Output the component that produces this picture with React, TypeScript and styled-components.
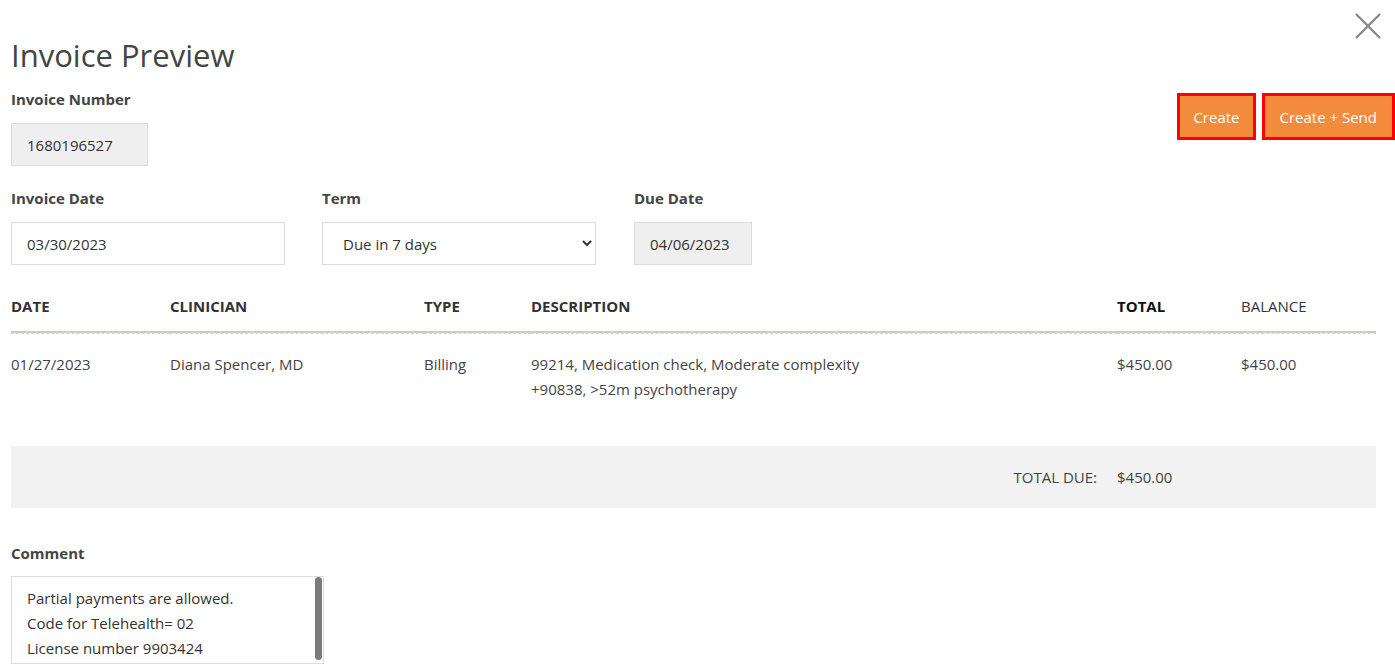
import React from 'react'
import styled, { createGlobalStyle } from 'styled-components'

const GlobalStyle = createGlobalStyle`
  * { box-sizing: border-box; }
  body {
    margin: 0;
    background: #fff;
    font-family: 'Source Sans Pro', 'Open Sans', 'Noto Sans', sans-serif;
    color: #444;
  }
`

const Page = styled.div`
  position: relative;
  padding: 35px 19px 0 11px;
  height: 668px;
  overflow: hidden;
`

const CloseButton = styled.button`
  position: absolute;
  top: 12px;
  right: 13px;
  width: 28px;
  height: 28px;
  padding: 0;
  border: none;
  background: none;
  cursor: pointer;
`

const Title = styled.h1`
  margin: 0;
  font-size: 31px;
  font-weight: 400;
  line-height: 40px;
  color: #444;
`

const TopRow = styled.div`
  display: flex;
  justify-content: space-between;
  align-items: flex-start;
  margin-top: 14px;
  margin-right: -19px;
`

const Field = styled.div<{ $width?: number }>`
  display: flex;
  flex-direction: column;
  width: ${p => (p.$width ? `${p.$width}px` : 'auto')};
`

const Label = styled.label`
  font-size: 15px;
  font-weight: 700;
  line-height: 20px;
  color: #444;
  margin-bottom: 14px;
`

const Input = styled.div<{ $readonly?: boolean }>`
  height: 43px;
  display: flex;
  align-items: center;
  padding: 0 15px;
  font-size: 15px;
  color: #333;
  background: ${p => (p.$readonly ? '#efefef' : '#fff')};
  border: 1px solid #dcdcdc;
`

const Select = styled.select`
  height: 43px;
  padding: 0 8px 0 16px;
  font-family: inherit;
  font-size: 15px;
  color: #333;
  background: #fff;
  border: 1px solid #dcdcdc;
  border-radius: 0;
`

const ButtonGroup = styled.div`
  display: flex;
  gap: 6px;
  margin-top: 4px;
`

const Button = styled.button<{ $wide?: boolean }>`
  height: 47px;
  padding: 0 ${p => (p.$wide ? 15 : 13)}px;
  font-family: inherit;
  font-size: 15px;
  color: #fff;
  background: #f38b3c;
  border: 3px solid #f00;
  cursor: pointer;
`

const FieldRow = styled.div`
  display: grid;
  grid-template-columns: 311px 312px 118px;
  margin-top: 22px;
`

const Table = styled.div`
  margin-top: 31px;
  display: grid;
  grid-template-columns: 159px 254px 107px 586px 124px 1fr;
`

const HeadCell = styled.div<{ $strong?: boolean; $plain?: boolean }>`
  font-size: 15px;
  font-weight: ${p => (p.$plain ? 400 : 700)};
  text-transform: uppercase;
  color: ${p => (p.$strong ? '#111' : '#333')};
  line-height: 20px;
  padding: 0 0 15px;
  border-bottom: 2px solid #d0cbc6;
  position: relative;

  &::after {
    content: '';
    position: absolute;
    left: 0;
    right: 0;
    bottom: -3px;
    border-bottom: 1px dashed #d6d2cd;
  }
`

const Cell = styled.div`
  font-size: 15px;
  line-height: 25px;
  color: #444;
  padding: 19px 0 44px;
`

const TotalBar = styled.div`
  height: 62px;
  display: grid;
  grid-template-columns: 1fr 259px;
  align-items: center;
  background: #f2f2f2;
  font-size: 15px;
  color: #444;
`

const TotalLabel = styled.span`
  justify-self: end;
  padding-right: 20px;
`

const CommentSection = styled.div`
  margin-top: 35px;
  width: 313px;
`

const CommentWrap = styled.div`
  position: relative;
  margin-top: -1px;
`

const CommentBox = styled.textarea`
  display: block;
  width: 313px;
  height: 88px;
  padding: 9px 15px 0;
  font-family: inherit;
  font-size: 15px;
  line-height: 25px;
  color: #333;
  border: 1px solid #dcdcdc;
  resize: none;
  outline: none;
  scrollbar-width: none;

  &::-webkit-scrollbar {
    display: none;
  }
`

const ScrollThumb = styled.div`
  position: absolute;
  top: 1px;
  right: 2px;
  width: 7px;
  height: 83px;
  border-radius: 4px;
  background: #7b7b7b;
  pointer-events: none;
`

const CloseIcon = () => (
  <svg width="28" height="28" viewBox="0 0 28 28">
    <path d="M2 2 L26 26 M26 2 L2 26" stroke="#8a8a8a" strokeWidth="2.4" fill="none" />
  </svg>
)

const App = () => (
  <>
    <GlobalStyle />
    <Page>
      <CloseButton aria-label="Close">
        <CloseIcon />
      </CloseButton>
      <Title>Invoice Preview</Title>
      <TopRow>
        <Field $width={137}>
          <Label>Invoice Number</Label>
          <Input $readonly>1680196527</Input>
        </Field>
        <ButtonGroup>
          <Button>Create</Button>
          <Button $wide>Create + Send</Button>
        </ButtonGroup>
      </TopRow>
      <FieldRow>
        <Field $width={274}>
          <Label>Invoice Date</Label>
          <Input>03/30/2023</Input>
        </Field>
        <Field $width={274}>
          <Label>Term</Label>
          <Select defaultValue="7">
            <option value="7">Due in 7 days</option>
            <option value="14">Due in 14 days</option>
            <option value="30">Due in 30 days</option>
          </Select>
        </Field>
        <Field $width={118}>
          <Label>Due Date</Label>
          <Input $readonly>04/06/2023</Input>
        </Field>
      </FieldRow>
      <Table>
        <HeadCell>Date</HeadCell>
        <HeadCell>Clinician</HeadCell>
        <HeadCell>Type</HeadCell>
        <HeadCell>Description</HeadCell>
        <HeadCell $strong>Total</HeadCell>
        <HeadCell $plain>Balance</HeadCell>
        <Cell>01/27/2023</Cell>
        <Cell>Diana Spencer, MD</Cell>
        <Cell>Billing</Cell>
        <Cell>
          99214, Medication check, Moderate complexity
          <br />
          +90838, &gt;52m psychotherapy
        </Cell>
        <Cell>$450.00</Cell>
        <Cell>$450.00</Cell>
      </Table>
      <TotalBar>
        <TotalLabel>TOTAL DUE:</TotalLabel>
        <span>$450.00</span>
      </TotalBar>
      <CommentSection>
        <Field>
          <Label>Comment</Label>
          <CommentWrap>
            <CommentBox
              readOnly
              defaultValue={'Partial payments are allowed.\nCode for Telehealth= 02\nLicense number 9903424\n'}
            />
            <ScrollThumb />
          </CommentWrap>
        </Field>
      </CommentSection>
    </Page>
  </>
)

export default App
